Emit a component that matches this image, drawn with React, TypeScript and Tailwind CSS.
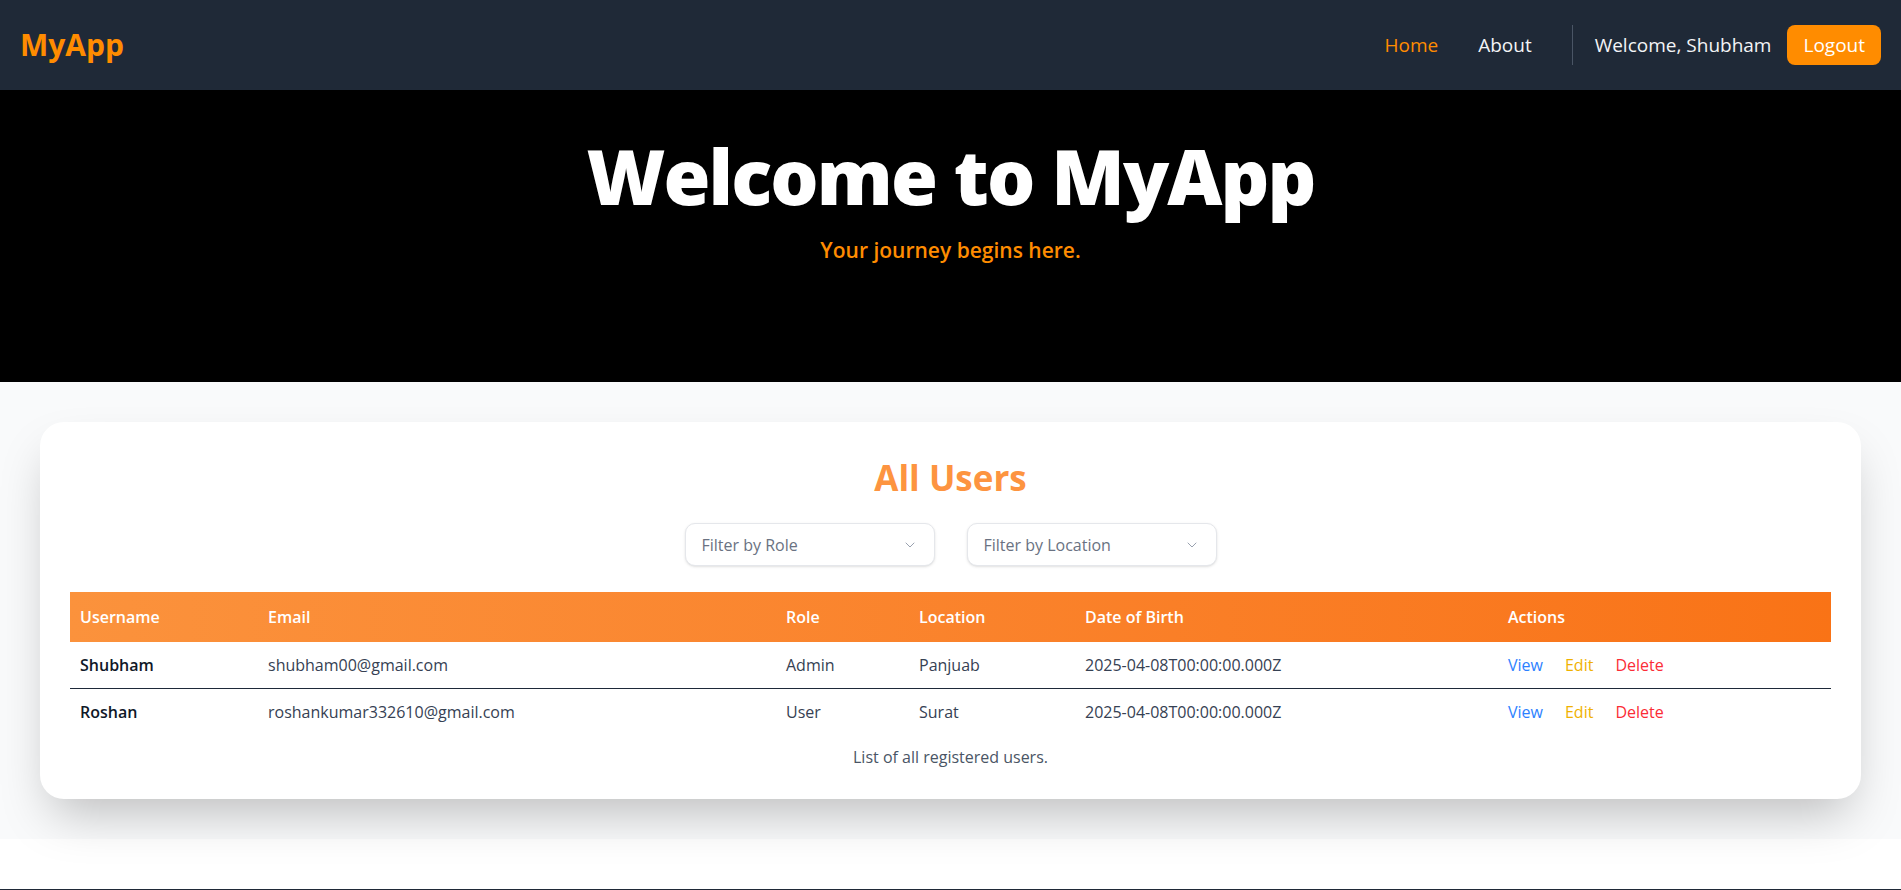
import { ChevronDown } from "lucide-react";

const users = [
  { username: "Shubham", email: "shubham00@gmail.com", role: "Admin", location: "Panjuab", dob: "2025-04-08T00:00:00.000Z" },
  { username: "Roshan", email: "roshankumar332610@gmail.com", role: "User", location: "Surat", dob: "2025-04-08T00:00:00.000Z" },
];

function FilterSelect({ label }: { label: string }) {
  return (
    <div className="w-[250px] h-[43px] flex items-center justify-between px-4 border border-gray-200 rounded-[10px] bg-white shadow-sm text-gray-500 text-base cursor-pointer">
      <span>{label}</span>
      <ChevronDown className="h-4 w-4 text-gray-400" strokeWidth={1.5} />
    </div>
  );
}

export default function App() {
  return (
    <div className="min-h-screen bg-white font-['Open_Sans',sans-serif]">
      {/* Navbar */}
      <nav className="h-[90px] bg-[#1f2937] flex items-center justify-between pl-[20px] pr-[20px]">
        <span className="text-3xl font-bold text-[#ff8c00]">MyApp</span>
        <div className="flex items-center">
          <a className="text-[19px] text-[#ff8c00]">Home</a>
          <a className="text-[19px] text-gray-100 ml-[40px]">About</a>
          <div className="w-px h-10 bg-gray-600 ml-[40px] mr-[22px]" />
          <span className="text-[19px] text-gray-100">Welcome, Shubham</span>
          <button className="ml-4 h-10 px-4 rounded-lg bg-[#ff8c00] text-white text-[19px]">Logout</button>
        </div>
      </nav>

      {/* Hero */}
      <section className="h-[292px] bg-black flex flex-col items-center pt-12">
        <h1 className="text-[76px] leading-none font-black text-white tracking-tight">Welcome to MyApp</h1>
        <p className="mt-[21px] text-[21px] font-semibold text-[#ff8c00]">Your journey begins here.</p>
      </section>

      {/* Users */}
      <section className="bg-gray-50 p-10">
        <div className="bg-white rounded-3xl shadow-2xl px-[30px] pt-[36px] pb-[30px]">
          <h2 className="text-[35px] leading-10 font-bold text-[#fd9440] text-center mb-[25px]">All Users</h2>
          <div className="flex justify-center gap-8 mb-[26px]">
            <FilterSelect label="Filter by Role" />
            <FilterSelect label="Filter by Location" />
          </div>
          <table className="w-full table-fixed border-collapse text-left">
            <thead>
              <tr className="bg-gradient-to-r from-[#fb923c] to-[#f97316] text-white">
                <th className="w-[188px] px-2.5 py-[13px] font-semibold">Username</th>
                <th className="w-[518px] px-2.5 py-[13px] font-semibold">Email</th>
                <th className="w-[133px] px-2.5 py-[13px] font-semibold">Role</th>
                <th className="w-[166px] px-2.5 py-[13px] font-semibold">Location</th>
                <th className="w-[423px] px-2.5 py-[13px] font-semibold">Date of Birth</th>
                <th className="px-2.5 py-[13px] font-semibold">Actions</th>
              </tr>
            </thead>
            <tbody>
              {users.map((u, i) => (
                <tr key={u.email} className={i < users.length - 1 ? "border-b border-gray-800" : ""}>
                  <td className="px-2.5 py-[11px] font-semibold text-gray-900">{u.username}</td>
                  <td className="px-2.5 py-[11px] text-gray-700">{u.email}</td>
                  <td className="px-2.5 py-[11px] text-gray-700">{u.role}</td>
                  <td className="px-2.5 py-[11px] text-gray-700">{u.location}</td>
                  <td className="px-2.5 py-[11px] text-gray-700">{u.dob}</td>
                  <td className="px-2.5 py-[11px]">
                    <div className="flex gap-[22px]">
                      <a className="text-blue-500 cursor-pointer">View</a>
                      <a className="text-yellow-500 cursor-pointer">Edit</a>
                      <a className="text-red-500 cursor-pointer">Delete</a>
                    </div>
                  </td>
                </tr>
              ))}
            </tbody>
            <caption className="caption-bottom pt-[10px] text-gray-600">List of all registered users.</caption>
          </table>
        </div>
      </section>

      {/* Footer */}
      <footer className="mt-[50px] h-16 bg-[#1f2937]" />
    </div>
  );
}
